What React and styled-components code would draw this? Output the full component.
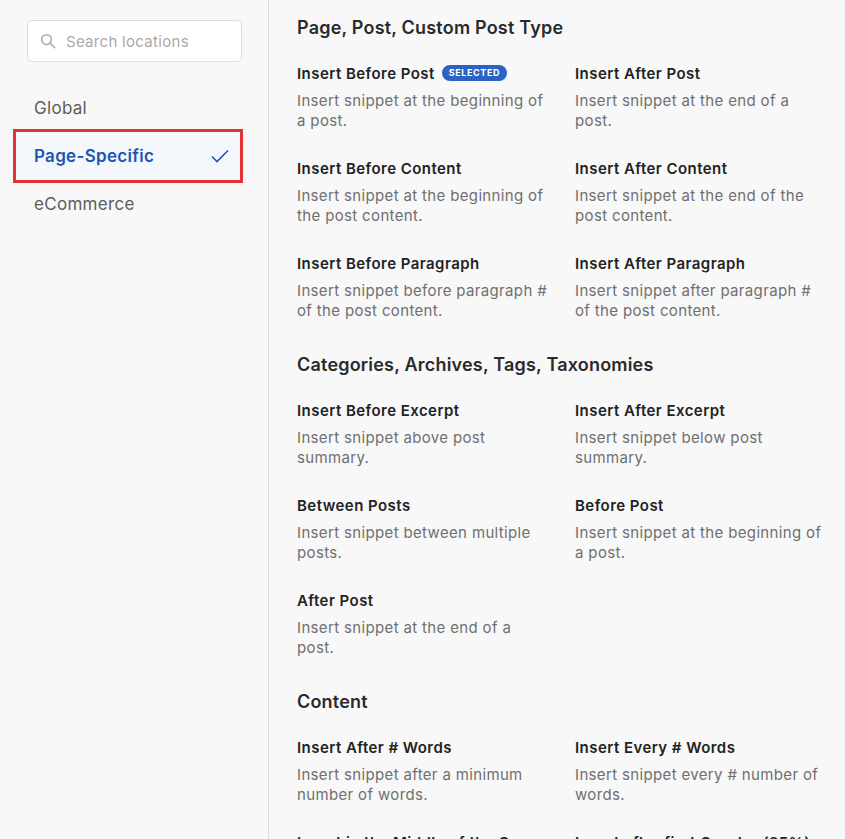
import React from "react";
import styled, { createGlobalStyle } from "styled-components";

const Global = createGlobalStyle`
  body { margin:0; background:#f8f8f8; font-family: Inter, "Noto Sans", sans-serif; overflow:hidden; }
`;
const Page = styled.div`display:flex; height:839px; width:845px; overflow:hidden;`;
const Side = styled.div`width:269px; border-right:1px solid #dcdcdc; flex-shrink:0; padding:20px 0 0 0; box-sizing:border-box;`;
const Search = styled.div`margin:0 26px 0 27px; height:42px; border:1px solid #dedede; border-radius:5px; background:#fff; display:flex; align-items:center; gap:9px; padding:0 11px; box-sizing:border-box; color:#a9a9a9; font-size:15px; letter-spacing:0.3px;`;
const Nav = styled.div`margin-top:22px; display:flex; flex-direction:column;`;
const NavItem = styled.div`
  height:${p=>p.$active?"54px":"48px"}; display:flex; align-items:center; justify-content:space-between;
  padding:0 ${p=>p.$active?"10px 0 18px":"0 0 34px"}; font-size:17px; letter-spacing:0.3px; color:${p=>p.$active?"#1e55b3":"#5d5d5d"}; font-weight:${p=>p.$active?600:400};
  ${p=>p.$active&&`margin:-3px 25px -3px 13px; border:3px solid #e53237; background:#f4f7fc;`}
  box-sizing:border-box;
`;
const Main = styled.div`flex:1; padding:17px 0 0 28px;`;
const Heading = styled.div`font-size:18px; font-weight:600; color:#2a2a2a; margin-bottom:25px; letter-spacing:0.2px;`;
const Grid = styled.div`display:grid; grid-template-columns:278px 250px; row-gap:27px; margin-bottom:33px;`;
const Title = styled.div`font-size:15px; font-weight:600; color:#222; display:flex; align-items:center; gap:7px; height:20px; margin-bottom:8px; white-space:nowrap; letter-spacing:0.45px;`;
const Desc = styled.div`font-size:15px; color:#6f6f6f; line-height:20px; width:252px; letter-spacing:0.35px;`;
const Badge = styled.span`background:#2a63c4; color:#fff; font-size:9px; font-weight:700; letter-spacing:0.6px; padding:3px 7px; border-radius:9px; line-height:10px;`;
const Item = styled.div``;

const sections = [
  ["Page, Post, Custom Post Type", [
    ["Insert Before Post","Insert snippet at the beginning of a post.",true],
    ["Insert After Post","Insert snippet at the end of a post."],
    ["Insert Before Content","Insert snippet at the beginning of the post content."],
    ["Insert After Content","Insert snippet at the end of the post content."],
    ["Insert Before Paragraph","Insert snippet before paragraph # of the post content."],
    ["Insert After Paragraph","Insert snippet after paragraph # of the post content."],
  ]],
  ["Categories, Archives, Tags, Taxonomies", [
    ["Insert Before Excerpt","Insert snippet above post summary."],
    ["Insert After Excerpt","Insert snippet below post summary."],
    ["Between Posts","Insert snippet between multiple posts."],
    ["Before Post","Insert snippet at the beginning of a post."],
    ["After Post","Insert snippet at the end of a post."],
  ]],
  ["Content", [
    ["Insert After # Words","Insert snippet after a minimum number of words."],
    ["Insert Every # Words","Insert snippet every # number of words."],
    ["Insert in the Middle of the Con...","Insert snippet in the middle of the post content."],
    ["Insert after first Quarter (25%)","Insert snippet after the first quarter of the content."],
  ]],
];

export default function App(){
  return (<Page><Global/>
    <Side>
      <Search>
        <svg width="18" height="18" viewBox="0 0 24 24" fill="none" stroke="#aaa" strokeWidth="2" strokeLinecap="round"><circle cx="10" cy="10" r="6.5"/><path d="M15 15l6 6"/></svg>
        Search locations
      </Search>
      <Nav>
        <NavItem>Global</NavItem>
        <NavItem $active>Page-Specific
          <svg width="20" height="16" viewBox="0 0 20 16" fill="none" stroke="#1e55b3" strokeWidth="1.6"><path d="M2 8.5l5 5L18 2.5"/></svg>
        </NavItem>
        <NavItem>eCommerce</NavItem>
      </Nav>
    </Side>
    <Main>
      {sections.map(([h,items])=>(
        <div key={h}>
          <Heading>{h}</Heading>
          <Grid>
            {items.map(([t,d,s])=>(
              <Item key={t}>
                <Title>{t}{s&&<Badge>SELECTED</Badge>}</Title>
                <Desc>{d}</Desc>
              </Item>
            ))}
          </Grid>
        </div>
      ))}
    </Main>
  </Page>);
}
